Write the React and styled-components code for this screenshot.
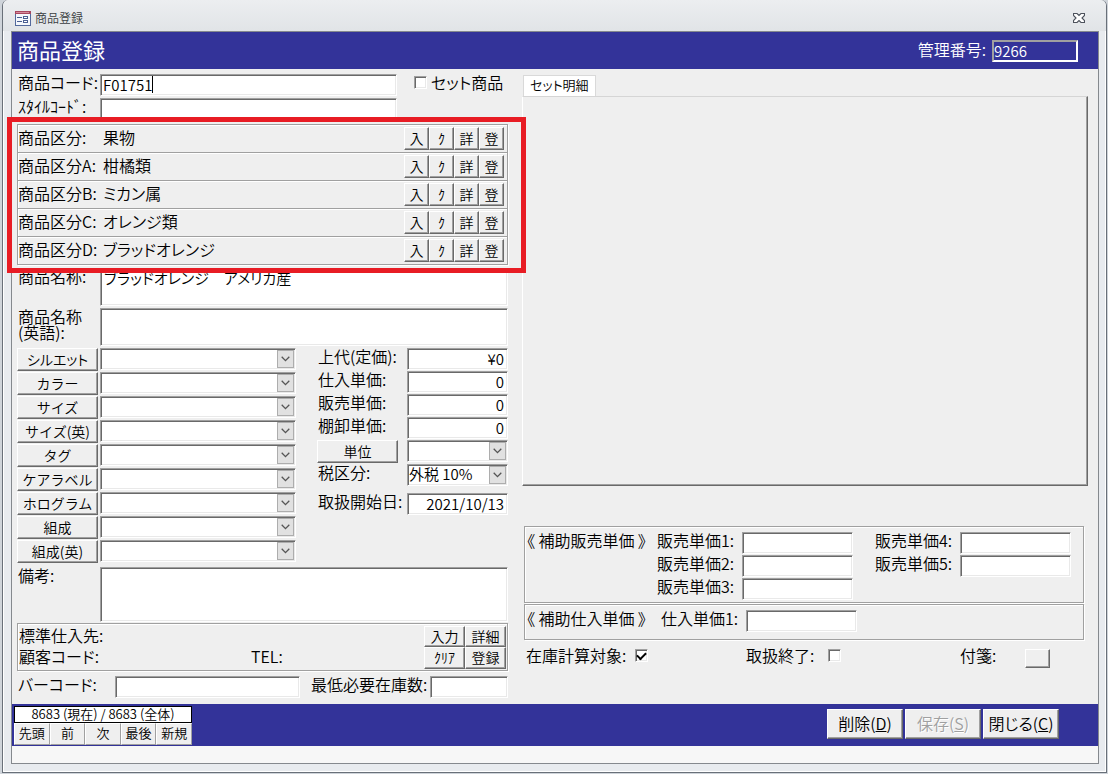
import React, { useState } from 'react'
import styled, { createGlobalStyle, css } from 'styled-components'

const attributes = [
  { id: 'silhouette', name: 'シルエット', tight: true },
  { id: 'color', name: 'カラー' },
  { id: 'size', name: 'サイズ' },
  { id: 'sizeEn', name: 'サイズ(英)' },
  { id: 'tag', name: 'タグ' },
  { id: 'care', name: 'ケアラベル' },
  { id: 'hologram', name: 'ホログラム' },
  { id: 'composition', name: '組成' },
  { id: 'compositionEn', name: '組成(英)' },
]

const categories = [
  { name: '商品区分:', value: '果物' },
  { name: '商品区分A:', value: '柑橘類' },
  { name: '商品区分B:', value: 'ミカン属' },
  { name: '商品区分C:', value: 'オレンジ類' },
  { name: '商品区分D:', value: 'ブラッドオレンジ' },
]

const prices = [
  { id: 'listPrice', name: '上代(定価):', value: '¥0' },
  { id: 'buyPrice', name: '仕入単価:', value: '0' },
  { id: 'sellPrice', name: '販売単価:', value: '0' },
  { id: 'stockPrice', name: '棚卸単価:', value: '0' },
]

const Combo = ({ id, label, options = [''] }) => (
  <ComboBox>
    <Select id={id} aria-label={label}>
      {options.map(option => (
        <option key={option}>{option}</option>
      ))}
    </Select>
    <Arrow>
      <svg width="9" height="6" viewBox="0 0 9 6">
        <path d="M0.7 0.8 L4.5 4.6 L8.3 0.8" fill="none" stroke="#555" strokeWidth="1.3" />
      </svg>
    </Arrow>
  </ComboBox>
)

const FormIcon = () => (
  <svg width="16" height="15" viewBox="0 0 16 15" shapeRendering="crispEdges">
    <rect x="0.5" y="0.5" width="15" height="14" fill="#f4f7fc" stroke="#53699c" />
    <rect x="0" y="0" width="16" height="3" fill="#a8475f" />
    <rect x="1" y="1" width="13" height="1" fill="#d58a9c" />
    <path d="M2 6.5h5M2 10.5h5" stroke="#4a5f93" />
    <rect x="8.5" y="5.5" width="4" height="2" fill="#fff" stroke="#4a5f93" />
    <rect x="8.5" y="9.5" width="4" height="2" fill="#fff" stroke="#4a5f93" />
  </svg>
)

const CloseIcon = () => (
  <svg width="12" height="10" viewBox="0 0 12 10">
    <path
      d="M0.5 0.5h3.5L6 2.5 8 0.5h3.5v2L9 5l2.5 2.5v2H8L6 7.5 4 9.5H0.5v-2L3 5 0.5 2.5z"
      fill="#fff"
      stroke="#4d525c"
      strokeWidth="1.1"
    />
  </svg>
)

const App = () => {
  const [code, setCode] = useState('F01751')
  const [name, setName] = useState('ブラッドオレンジ　アメリカ産')

  return (
    <Window>
      <GlobalStyle />
      <TitleBar>
        <FormIcon />
        <Caption>商品登録</Caption>
        <CloseButton aria-label="閉じる">
          <CloseIcon />
        </CloseButton>
      </TitleBar>
      <Frame>
        <Header>
          <Heading>商品登録</Heading>
          <NumberLabel htmlFor="number">管理番号:</NumberLabel>
          <NumberField id="number" defaultValue="9266" />
        </Header>

        <Form>
          <Main>
            <Line>
              <Label htmlFor="code">商品コード:</Label>
              <CodeCell>
                <Field id="code" value={code} onChange={e => setCode(e.target.value)} />
                <Caret aria-hidden="true" />
              </CodeCell>
              <SetLabel>
                <Check type="checkbox" />
                セット商品
              </SetLabel>
            </Line>
            <Line>
              <Label htmlFor="style">ｽﾀｲﾙｺｰﾄﾞ:</Label>
              <Field id="style" $width={297} />
            </Line>

            <Categories>
              {categories.map(category => (
                <Category key={category.name}>
                  <CategoryName>{category.name}</CategoryName>
                  <CategoryValue>{category.value}</CategoryValue>
                  <SmallButton>入</SmallButton>
                  <SmallButton>ｸ</SmallButton>
                  <SmallButton>詳</SmallButton>
                  <SmallButton>登</SmallButton>
                </Category>
              ))}
              <Highlight />
            </Categories>

            <TextLine>
              <Label htmlFor="name">商品名称:</Label>
              <Area id="name" value={name} onChange={e => setName(e.target.value)} />
            </TextLine>
            <TextLine>
              <Label htmlFor="nameEn">
                商品名称
                <br />
                (英語):
              </Label>
              <Area id="nameEn" />
            </TextLine>

            <Details>
              <Attributes>
                {attributes.map(attribute => (
                  <Attribute key={attribute.id}>
                    <WideButton $tight={attribute.tight}>{attribute.name}</WideButton>
                    <Combo id={attribute.id} label={attribute.name} />
                  </Attribute>
                ))}
              </Attributes>
              <Prices>
                {prices.map(price => (
                  <Price key={price.id}>
                    <Label htmlFor={price.id}>{price.name}</Label>
                    <Field id={price.id} defaultValue={price.value} $right />
                  </Price>
                ))}
                <Price $tall>
                  <WideButton>単位</WideButton>
                  <Combo id="unit" label="単位" />
                </Price>
                <Price $tall>
                  <Label htmlFor="tax">税区分:</Label>
                  <Combo id="tax" options={['外税 10%', '']} />
                </Price>
                <StartDate>
                  <Label htmlFor="start">取扱開始日:</Label>
                  <Field id="start" defaultValue="2021/10/13" $right />
                </StartDate>
              </Prices>
            </Details>

            <TextLine>
              <Label htmlFor="note">備考:</Label>
              <Area id="note" $height={55} />
            </TextLine>

            <Supplier>
              <SupplierText>
                <div>標準仕入先:</div>
                <SupplierCode>
                  <span>顧客コード:</span>
                  <span>TEL:</span>
                </SupplierCode>
              </SupplierText>
              <SupplierButtons>
                <PlainButton>入力</PlainButton>
                <PlainButton>詳細</PlainButton>
                <PlainButton>ｸﾘｱ</PlainButton>
                <PlainButton>登録</PlainButton>
              </SupplierButtons>
            </Supplier>

            <Barcode>
              <Label htmlFor="barcode">バーコード:</Label>
              <Field id="barcode" />
              <StockLabel htmlFor="minStock">最低必要在庫数:</StockLabel>
              <Field id="minStock" />
            </Barcode>
          </Main>

          <Side>
            <Tab>セット明細</Tab>
            <TabPanel />
            <SalePrices>
              <GroupName>《 補助販売単価 》</GroupName>
              <PriceGrid>
                {[1, 2, 3].map(n => (
                  <React.Fragment key={n}>
                    <Label htmlFor={'sale' + n}>販売単価{n}:</Label>
                    <Field id={'sale' + n} />
                  </React.Fragment>
                ))}
              </PriceGrid>
              <PriceGrid>
                {[4, 5].map(n => (
                  <React.Fragment key={n}>
                    <Label htmlFor={'sale' + n}>販売単価{n}:</Label>
                    <Field id={'sale' + n} />
                  </React.Fragment>
                ))}
              </PriceGrid>
            </SalePrices>
            <BuyPrices>
              <GroupName>《 補助仕入単価 》</GroupName>
              <PriceGrid>
                <Label htmlFor="buy1">仕入単価1:</Label>
                <Field id="buy1" />
              </PriceGrid>
            </BuyPrices>
            <Flags>
              <FlagLabel>
                在庫計算対象:
                <Check type="checkbox" defaultChecked />
              </FlagLabel>
              <FlagLabel $gap={14}>
                取扱終了:
                <Check type="checkbox" />
              </FlagLabel>
              <FlagLabel as="div" $gap={29}>
                付箋:
                <TagButton aria-label="付箋" />
              </FlagLabel>
            </Flags>
          </Side>
        </Form>

        <Footer>
          <Navigator>
            <Count>8683 (現在) / 8683 (全体)</Count>
            <NavButtons>
              <NavButton>先頭</NavButton>
              <NavButton>前</NavButton>
              <NavButton>次</NavButton>
              <NavButton>最後</NavButton>
              <NavButton>新規</NavButton>
            </NavButtons>
          </Navigator>
          <Actions>
            <ActionButton>
              削除(<u>D</u>)
            </ActionButton>
            <ActionButton disabled>
              保存(<u>S</u>)
            </ActionButton>
            <ActionButton>
              閉じる(<u>C</u>)
            </ActionButton>
          </Actions>
        </Footer>
        <Bottom />
      </Frame>
    </Window>
  )
}

export default App

const GlobalStyle = createGlobalStyle`
  * {
    box-sizing: border-box;
  }
  body {
    margin: 0;
    background: #cfd4da;
    color: #000;
    font-family: 'Noto Sans CJK JP', sans-serif;
    font-size: 16px;
    font-weight: 350;
    line-height: 16px;
    font-feature-settings: 'palt';
  }
  button, input, select, textarea {
    margin: 0;
    color: inherit;
    font: inherit;
    font-feature-settings: inherit;
    border-radius: 0;
    outline: none;
  }
`

const sunken = css`
  border: 1px solid;
  border-color: #a0a0a0 #fff #fff #a0a0a0;
  box-shadow: inset 1px 1px #696969, inset -1px -1px #e9e9e9;
  background: #fff;
`

const raised = css`
  border: 1px solid;
  border-color: #fff #696969 #696969 #fff;
  box-shadow: inset -1px -1px #a0a0a0;
  background: #efefef;
`

const etched = css`
  border: 1px solid #a0a0a0;
  box-shadow: inset 1px 1px #fff, 1px 1px #fff;
`

const Window = styled.div`
  display: flex;
  flex-direction: column;
  min-height: calc(100vh - 1px);
  margin: 0 1px 1px 2px;
  border: 1px solid #697079;
  border-top: 0;
  border-radius: 6px 6px 0 0;
  box-shadow: inset 1px 0 #fff, inset -1px -1px #fff;
  background: #e8ebef;
`

const TitleBar = styled.div`
  display: flex;
  align-items: center;
  height: 31px;
  padding: 5px 21px 0 12px;
  border-radius: 6px 6px 0 0;
  background: linear-gradient(#eceef0, #e1e4e7);
`

const Caption = styled.div`
  flex: 1;
  margin-left: 4px;
  color: #3a3d42;
  font-size: 12px;
`

const CloseButton = styled.button`
  display: flex;
  padding: 0;
  border: 0;
  background: none;
`

const Frame = styled.div`
  flex: 1;
  display: flex;
  flex-direction: column;
  margin: 0 7px 8px 8px;
  border: 1px solid #85898e;
  background: #efefef;
`

const Header = styled.header`
  display: flex;
  align-items: center;
  height: 37px;
  padding: 0 20px 0 5px;
  background: #333399;
  color: #fff;
`

const Heading = styled.h1`
  flex: 1;
  margin: 0;
  padding-bottom: 4px;
  font-size: 22px;
  font-weight: 400;
  line-height: 32px;
`

const NumberLabel = styled.label`
  padding-bottom: 3px;
`

const NumberField = styled.input`
  width: 86px;
  height: 22px;
  margin-left: 6px;
  padding: 0;
  border: 2px solid;
  border-color: #a0a0a0 #fff #fff #a0a0a0;
  background: transparent;
  font-size: 15px;
`

const Form = styled.div`
  flex: 1;
  display: grid;
  grid-template-columns: 491px 1fr;
  gap: 14px;
  padding: 5px 10px 6px 5px;
`

const Main = styled.div`
  min-width: 0;
`

const Line = styled.div`
  display: flex;
  height: 24px;
`

const Label = styled.label`
  flex: none;
  width: 83px;
  padding-left: 1px;
  white-space: nowrap;
`

const Field = styled.input`
  ${sunken}
  width: ${props => (props.$width ? props.$width + 'px' : '100%')};
  min-width: 0;
  height: 22px;
  padding: 0 3px 2px 2px;
  font-size: 15px;
  text-align: ${props => (props.$right ? 'right' : 'left')};
`

const CodeCell = styled.div`
  position: relative;
  width: 297px;
`

/* insertion mark right after the typed code */
const Caret = styled.span`
  position: absolute;
  left: 52px;
  top: 2px;
  width: 1px;
  height: 17px;
  background: #000;
  pointer-events: none;
`

const SetLabel = styled.label`
  display: flex;
  gap: 4px;
  margin-left: 17px;
`

const Check = styled.input`
  ${sunken}
  appearance: none;
  flex: none;
  display: grid;
  place-items: center;
  width: 13px;
  height: 13px;
  margin-top: 2px;
  &:checked::after {
    content: '';
    width: 7px;
    height: 4px;
    margin-bottom: 2px;
    border: solid #000;
    border-width: 0 0 2px 2px;
    transform: rotate(-45deg);
  }
`

const Categories = styled.div`
  position: relative;
  margin: 2px 0 3px;
  border: solid #a0a0a0;
  border-width: 0 1px 1px;
  box-shadow: 1px 1px #fff;
`

const Category = styled.div`
  display: flex;
  align-items: center;
  height: 28px;
  padding-right: 3px;
  border-top: 1px solid #a0a0a0;
  box-shadow: inset 1px 1px #fff;
`

const CategoryName = styled.span`
  width: 85px;
  padding-bottom: 4px;
`

const CategoryValue = styled.span`
  flex: 1;
  padding-bottom: 4px;
`

const SmallButton = styled.button`
  ${raised}
  width: 25px;
  height: 23px;
  padding: 0 0 2px;
  font-size: 14px;
`

const Highlight = styled.div`
  position: absolute;
  z-index: 1;
  inset: -7px -19px -9px -11px;
  border: 5px solid #e81c24;
  pointer-events: none;
`

const TextLine = styled.div`
  display: flex;
  margin-bottom: 2px;
`

const Area = styled.textarea`
  ${sunken}
  display: block;
  flex: 1;
  height: ${props => props.$height || 38}px;
  padding: 1px 3px;
  font-size: 15px;
  resize: none;
`

const Details = styled.div`
  display: flex;
  justify-content: space-between;
  margin-bottom: 3px;
`

const Attributes = styled.div`
  width: 279px;
`

const Attribute = styled.div`
  display: grid;
  grid-template-columns: 81px 1fr;
  gap: 2px;
  height: 24px;
`

const WideButton = styled.button`
  ${raised}
  width: 81px;
  height: 23px;
  padding: 0 0 2px;
  font-size: 14px;
  font-feature-settings: ${props => (props.$tight ? "'palt'" : 'normal')};
`

const ComboBox = styled.div`
  position: relative;
  height: 22px;
`

const Select = styled.select`
  ${sunken}
  appearance: none;
  width: 100%;
  height: 22px;
  padding: 0 0 2px 1px;
  font-size: 15px;
`

const Arrow = styled.span`
  position: absolute;
  top: 2px;
  right: 2px;
  display: grid;
  place-items: center;
  width: 17px;
  height: 18px;
  border: 1px solid #adadad;
  background: #e1e1e1;
  pointer-events: none;
`

const Prices = styled.div`
  width: 191px;
`

const Price = styled.div`
  display: grid;
  grid-template-columns: 90px 1fr;
  height: ${props => (props.$tall ? 24 : 23)}px;
`

const StartDate = styled(Price)`
  margin-top: 5px;
`

const Supplier = styled.div`
  ${etched}
  display: flex;
  justify-content: space-between;
  margin: -1px 0 5px;
  height: 48px;
  padding: 1px;
`

const SupplierText = styled.div`
  width: 300px;
  line-height: 21px;
`

const SupplierCode = styled.div`
  display: grid;
  grid-template-columns: 232px 1fr;
`

const SupplierButtons = styled.div`
  display: grid;
  grid-template-columns: 41px 41px;
  grid-template-rows: 21px 22px;
  padding-top: 1px;
`

const PlainButton = styled.button`
  ${raised}
  padding: 0 0 2px;
  font-size: 14px;
`

const Barcode = styled.div`
  display: grid;
  grid-template-columns: 98px 185px 130px 78px;
`

const StockLabel = styled(Label)`
  padding-left: 11px;
`

const Side = styled.div`
  display: flex;
  flex-direction: column;
  min-width: 0;
`

const Tab = styled.button`
  align-self: flex-start;
  height: 21px;
  margin: 1px 0 0 1px;
  padding: 0 6px 2px;
  border: 1px solid #d9d9d9;
  border-bottom: 0;
  background: #fff;
  font-size: 13px;
`

const TabPanel = styled.div`
  flex: 1;
  min-height: 200px;
  margin-bottom: 40px;
  border: 1px solid;
  border-color: #d5d5d5 #696969 #696969 #fff;
  box-shadow: inset -1px -1px #a0a0a0;
`

const SalePrices = styled.div`
  ${etched}
  display: flex;
  height: 77px;
  margin: 0 4px 1px 2px;
  padding: 5px 0 0 2px;
  & > :last-child {
    margin-left: 21px;
  }
`

const BuyPrices = styled.div`
  ${etched}
  display: flex;
  gap: 4px;
  height: 36px;
  margin: 0 4px 0 2px;
  padding: 5px 0 0 2px;
`

const GroupName = styled.span`
  flex: none;
  width: 129px;
  white-space: nowrap;
`

const PriceGrid = styled.div`
  display: grid;
  grid-template-columns: 86px 111px;
  grid-auto-rows: 23px;
  align-content: start;
`

const Flags = styled.div`
  display: grid;
  grid-template-columns: 220px 214px 1fr;
  height: 58px;
  padding: 7px 0 0 4px;
`

const FlagLabel = styled.label`
  display: flex;
  gap: ${props => props.$gap || 9}px;
`

const TagButton = styled.button`
  ${raised}
  width: 25px;
  height: 19px;
  margin-top: 2px;
  padding: 0;
`

const Footer = styled.footer`
  display: flex;
  justify-content: space-between;
  height: 42px;
  padding: 2px 39px 1px 2px;
  background: #333399;
`

const Navigator = styled.div`
  width: 178px;
`

const Count = styled.div`
  height: 17px;
  border: 1px solid #000;
  background: #fff;
  font-size: 13px;
  line-height: 13px;
  text-align: center;
`

const NavButtons = styled.div`
  display: grid;
  grid-template-columns: repeat(5, 1fr);
`

const NavButton = styled.button`
  height: 22px;
  padding: 0 0 2px;
  border: 1px solid;
  border-color: #fff #a0a0a0 #a0a0a0 #fff;
  background: #efefef;
  font-size: 13px;
`

const Actions = styled.div`
  display: flex;
  gap: 2px;
  padding-top: 3px;
`

const ActionButton = styled.button`
  ${raised}
  width: 76px;
  height: 30px;
  padding: 0 0 3px;
  white-space: nowrap;
  &:disabled {
    color: #a0a0a0;
    text-shadow: 1px 1px #fff;
  }
`

const Bottom = styled.div`
  height: 17px;
  background: #f7f7f7;
`
